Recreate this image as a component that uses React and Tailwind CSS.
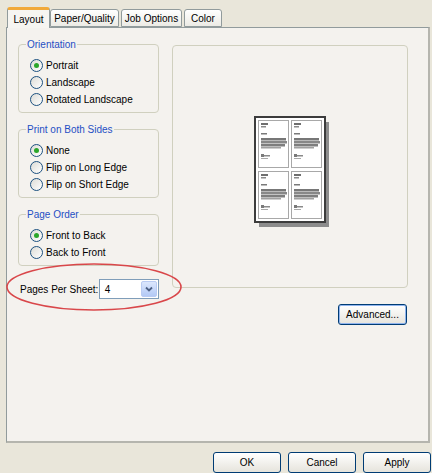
import React from 'react';

const font = { fontFamily: '"Liberation Sans", Arial, sans-serif' };

const Radio = ({ label, checked }) => (
    <div className="flex items-center h-[17px]">
        <span className="w-[13px] h-[13px] rounded-full border border-[#1c5180] bg-gradient-to-br from-[#dcdcd6] to-white flex items-center justify-center shrink-0">
            {checked && <span className="w-[5px] h-[5px] rounded-full bg-[#2aa62a]" />}
        </span>
        <span className="ml-[3px] text-[10px] text-black leading-none">{label}</span>
    </div>
);

const Group = ({ title, options, className = '' }) => (
    <fieldset className={`border border-[#d0d0bf] rounded-[4px] pl-[11px] pt-[6px] pb-[4px] ${className}`}>
        <legend className="-ml-[4px] px-[1px] text-[10px] leading-[13px] text-[#1f4fc4]">{title}</legend>
        {options.map((o) => (
            <Radio key={o.label} label={o.label} checked={o.checked} />
        ))}
    </fieldset>
);

const XpButton = ({ children, focused, className = '' }) => (
    <button
        className={`h-[21px] w-[68px] rounded-[3px] border border-[#003c74] bg-gradient-to-b from-white to-[#e6e4dc] text-[10px] text-black ${focused ? 'shadow-[inset_0_0_0_1px_#8fb4ee]' : ''} ${className}`}
    >
        {children}
    </button>
);

// 4-up preview drawing
const PreviewPages = () => {
    const cells = [
        [4, 4],
        [37, 4],
        [4, 55],
        [37, 55],
    ];
    return (
        <svg width="76" height="112" viewBox="0 0 76 112">
            <rect x="5" y="6" width="70" height="105" fill="#8c8c8c" />
            <rect x="1" y="1" width="70" height="105" fill="#fff" stroke="#3c3c3c" strokeWidth="2" />
            {cells.map(([x, y], i) => (
                <g key={i}>
                    <rect x={x + 0.5} y={y + 0.5} width="30" height="47" fill="#fff" stroke="#a8a8a8" strokeWidth="1" />
                    <rect x={x + 3} y={y + 3} width="7" height="2" fill="#6f6f6f" />
                    <rect x={x + 3} y={y + 6} width="5" height="1.5" fill="#8a8a8a" />
                    <rect x={x + 3} y={y + 13} width="6" height="1.5" fill="#7a7a7a" />
                    <rect x={x + 3} y={y + 18} width="25" height="2.5" fill="#777" />
                    <rect x={x + 3} y={y + 21} width="26" height="2.5" fill="#888" />
                    <rect x={x + 3} y={y + 24} width="24" height="2.5" fill="#7e7e7e" />
                    <rect x={x + 3} y={y + 27} width="20" height="1.5" fill="#a0a0a0" />
                    <rect x={x + 3} y={y + 34} width="3" height="3" fill="#7a7a7a" />
                    <rect x={x + 6} y={y + 35} width="6" height="1.5" fill="#8a8a8a" />
                    <rect x={x + 3} y={y + 38} width="7" height="1" fill="#a8a8a8" />
                </g>
            ))}
        </svg>
    );
};

const App = () => {
    return (
        <div className="relative w-[432px] h-[473px] bg-[#e9e6da] overflow-hidden" style={font}>
            {/* tabs */}
            <div className="flex items-end h-[27px] pl-[7px]">
                <div className="h-[21px] w-[43px] -mb-px z-10 rounded-t-[3px] border border-b-0 border-[#919b9c] border-t-[3px] border-t-[#f1a93a] bg-[#f6f5f1] text-[10px] flex items-center justify-center">
                    Layout
                </div>
                <div className="h-[18px] w-[69px] rounded-t-[3px] border border-[#919b9c] bg-gradient-to-b from-white to-[#ecebe5] text-[10px] flex items-center justify-center">
                    Paper/Quality
                </div>
                <div className="h-[18px] w-[61px] ml-[2px] rounded-t-[3px] border border-[#919b9c] bg-gradient-to-b from-white to-[#ecebe5] text-[10px] flex items-center justify-center">
                    Job Options
                </div>
                <div className="h-[18px] w-[38px] ml-[2px] rounded-t-[3px] border border-[#919b9c] bg-gradient-to-b from-white to-[#ecebe5] text-[10px] flex items-center justify-center">
                    Color
                </div>
            </div>

            {/* tab page */}
            <div className="ml-[6px] w-[424px] h-[416px] border border-[#919b9c] border-r-2 border-b-2 border-r-[#b5b5ae] border-b-[#b5b5ae] bg-[#f4f2ee] flex pl-[11px] pt-[10px]">
                <div className="w-[141px] flex flex-col">
                    <Group
                        title="Orientation"
                        options={[
                            { label: 'Portrait', checked: true },
                            { label: 'Landscape' },
                            { label: 'Rotated Landscape' },
                        ]}
                    />
                    <Group
                        className="mt-[10px]"
                        title="Print on Both Sides"
                        options={[
                            { label: 'None', checked: true },
                            { label: 'Flip on Long Edge' },
                            { label: 'Flip on Short Edge' },
                        ]}
                    />
                    <Group
                        className="mt-[10px]"
                        title="Page Order"
                        options={[{ label: 'Front to Back', checked: true }, { label: 'Back to Front' }]}
                    />
                    <div className="flex items-center mt-[13px] ml-[2px]">
                        <span className="text-[10px] w-[80px] whitespace-nowrap">Pages Per Sheet:</span>
                        <div className="flex h-[20px] w-[61px] border border-[#7f9db9] bg-white">
                            <span className="flex-1 text-[10px] pl-[5px] flex items-center">4</span>
                            <span className="w-[16px] m-px rounded-[2px] bg-gradient-to-b from-[#dce7fd] to-[#b3c9f5] border border-[#b9cbf3] flex items-center justify-center">
                                <svg width="8" height="6" viewBox="0 0 8 6">
                                    <path d="M1 1.5 L4 4.5 L7 1.5" fill="none" stroke="#4d6185" strokeWidth="1.8" />
                                </svg>
                            </span>
                        </div>
                    </div>
                </div>

                <div className="ml-[13px] flex flex-col items-end">
                    <div className="w-[236px] h-[243px] mt-[7px] rounded-[4px] border border-[#d0d0bf] flex items-center justify-center">
                        <div className="ml-[4px] mt-[10px]">
                            <PreviewPages />
                        </div>
                    </div>
                    <XpButton focused className="mt-[16px] mr-px w-[69px]">
                        Advanced...
                    </XpButton>
                </div>
            </div>

            {/* dialog buttons */}
            <div className="flex justify-end gap-[7px] mt-[9px] pr-[1px]">
                <XpButton>OK</XpButton>
                <XpButton>Cancel</XpButton>
                <XpButton>Apply</XpButton>
            </div>

            {/* red annotation ellipse */}
            <svg className="absolute left-0 top-0 pointer-events-none" width="432" height="473">
                <ellipse cx="94" cy="287" rx="87" ry="23" fill="none" stroke="#d9474a" strokeWidth="1.6" />
            </svg>
        </div>
    );
};

export default App;
